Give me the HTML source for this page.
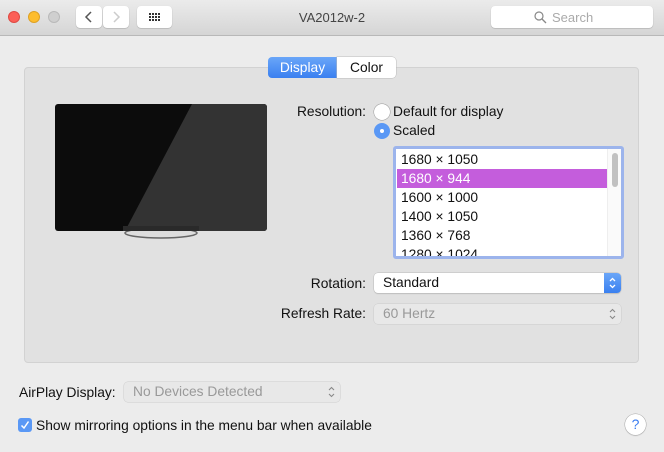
<!DOCTYPE html>
<html><head><meta charset="utf-8"><style>
*{box-sizing:border-box;margin:0;padding:0}
body{width:664px;height:452px;overflow:hidden;background:#ececec;font-family:"Liberation Sans",sans-serif;font-size:13.8px;color:#111;position:relative}
.a{position:absolute}
.tb{left:0;top:0;width:664px;height:36px;background:linear-gradient(#ebebeb,#d5d5d5);border-bottom:1px solid #b8b8b8}
.dot{width:12px;height:12px;border-radius:50%;top:11px}
.btn{background:#fff;border-radius:4px;box-shadow:0 0.5px 1px rgba(0,0,0,.25);top:6px;height:22px}
.panel{left:24px;top:67px;width:615px;height:296px;background:#e1e1e1;border:1px solid #d2d2d2;border-radius:4px}
.lbl{text-align:right;width:120px}
.pop{background:#fff;border-radius:4px;box-shadow:0 0 0 0.5px #bbb,0 1px 1px rgba(0,0,0,.15);height:20px;padding:2px 0 0 9px}
.dis{background:#e8e8e8;color:#999;box-shadow:0 0 0 0.5px #ccc}
.row{height:19px;padding:2px 0 0 4px;width:210px}
</style></head><body>
<div class="a tb"></div>
<div class="a dot" style="left:8px;background:#fc5f57;border:.5px solid #de4a43"></div>
<div class="a dot" style="left:28px;background:#fdbd2e;border:.5px solid #dea124"></div>
<div class="a dot" style="left:48px;background:#cfcfcf;border:.5px solid #b9b9b9"></div>
<div class="a btn" style="left:76px;width:26px"><svg width="26" height="22"><path d="M15 6L10 11L15 16" stroke="#555" stroke-width="1.5" fill="none"/></svg></div>
<div class="a btn" style="left:103px;width:26px"><svg width="26" height="22"><path d="M11 6L16 11L11 16" stroke="#ccc" stroke-width="1.5" fill="none"/></svg></div>
<div class="a btn" style="left:137px;width:35px"><svg width="35" height="22"><g fill="#333"><rect x="12" y="7" width="2" height="2"/><rect x="15" y="7" width="2" height="2"/><rect x="18" y="7" width="2" height="2"/><rect x="21" y="7" width="2" height="2"/><rect x="12" y="10" width="2" height="2"/><rect x="15" y="10" width="2" height="2"/><rect x="18" y="10" width="2" height="2"/><rect x="21" y="10" width="2" height="2"/><rect x="12" y="13" width="2" height="2"/><rect x="15" y="13" width="2" height="2"/><rect x="18" y="13" width="2" height="2"/><rect x="21" y="13" width="2" height="2"/></g></svg></div>
<div class="a" style="left:0;width:664px;top:10px;text-align:center;color:#444;font-size:13px">VA2012w-2</div>
<div class="a btn" style="left:491px;width:162px;color:#aaa;padding:4px 0 0 43px;font-size:13px"><svg class="a" style="left:43px;top:5px" width="13" height="13"><circle cx="5" cy="5" r="4" stroke="#888" stroke-width="1.2" fill="none"/><path d="M8 8L12 12" stroke="#888" stroke-width="1.3"/></svg><span style="margin-left:18px">Search</span></div>

<div class="a panel"></div>
<div class="a" style="left:268px;top:57px;width:69px;height:21px;background:linear-gradient(#6aa6f8,#3a80f0);color:#fff;border-radius:4px 0 0 4px;text-align:center;padding-top:3px">Display</div>
<div class="a" style="left:337px;top:57px;width:59px;height:21px;background:#fff;border-radius:0 4px 4px 0;box-shadow:0 0 0 .5px #bbb;text-align:center;padding-top:3px">Color</div>

<svg class="a" style="left:55px;top:104px" width="212" height="136">
<rect x="0" y="0" width="212" height="127" rx="3" fill="#0c0c0c"/>
<path d="M137 0H209a3 3 0 0 1 3 3V124a3 3 0 0 1-3 3H70Z" fill="#333"/>
<ellipse cx="106" cy="129" rx="36" ry="5" fill="#ddd" stroke="#666" stroke-width="1.5"/>
<rect x="68" y="122" width="76" height="5" fill="#2a2a2a"/>
</svg>

<div class="a lbl" style="left:246px;top:104px">Resolution:</div>
<div class="a" style="left:374px;top:104px;width:16px;height:16px;border-radius:50%;background:#fff;box-shadow:0 0 0 .5px #999"></div>
<div class="a" style="left:393px;top:104px">Default for display</div>
<div class="a" style="left:374px;top:123px;width:16px;height:16px;border-radius:50%;background:#5a98f5"><div class="a" style="left:6px;top:6px;width:4px;height:4px;border-radius:50%;background:#fff"></div></div>
<div class="a" style="left:393px;top:123px">Scaled</div>

<div class="a" style="left:393px;top:146px;width:231px;height:113px;border:3px solid #9cb4ec;border-radius:3px;background:#fff;overflow:hidden">
<div style="position:absolute;left:1px;top:1px;height:107px;overflow:hidden">
<div class="row">1680 × 1050</div>
<div class="row" style="background:#c45ddc;color:#fff">1680 × 944</div>
<div class="row">1600 × 1000</div>
<div class="row">1400 × 1050</div>
<div class="row">1360 × 768</div>
<div class="row">1280 × 1024</div></div>
<div class="a" style="right:0;top:0;width:14px;height:107px;border-left:1px solid #eee;background:#fafafa"><div class="a" style="left:4px;top:4px;width:6px;height:34px;border-radius:3px;background:#c1c1c1"></div></div>
</div>

<div class="a lbl" style="left:246px;top:276px">Rotation:</div>
<div class="a pop" style="left:374px;top:273px;width:247px">Standard<div class="a" style="right:0;top:0;width:17px;height:20px;background:linear-gradient(#6aa6f8,#3a80f0);border-radius:0 4px 4px 0"><svg width="17" height="20"><path d="M6 8L8.5 5.5L11 8M6 12L8.5 14.5L11 12" stroke="#fff" stroke-width="1.3" fill="none"/></svg></div></div>
<div class="a lbl" style="left:246px;top:306px">Refresh Rate:</div>
<div class="a pop dis" style="left:374px;top:304px;width:247px">60 Hertz<svg class="a" style="right:0;top:0" width="17" height="20"><path d="M6 8L8.5 5.5L11 8M6 12L8.5 14.5L11 12" stroke="#888" stroke-width="1.1" fill="none"/></svg></div>

<div class="a" style="left:19px;top:385px">AirPlay Display:</div>
<div class="a pop dis" style="left:124px;top:382px;width:216px">No Devices Detected<svg class="a" style="right:0;top:0" width="17" height="20"><path d="M6 8L8.5 5.5L11 8M6 12L8.5 14.5L11 12" stroke="#888" stroke-width="1.1" fill="none"/></svg></div>

<div class="a" style="left:18px;top:418px;width:14px;height:14px;border-radius:3px;background:#5a98f5"><svg width="14" height="14"><path d="M3.5 7.5L6 10L10.5 3.5" stroke="#fff" stroke-width="1.5" fill="none"/></svg></div>
<div class="a" style="left:36px;top:418px">Show mirroring options in the menu bar when available</div>
<div class="a" style="left:625px;top:414px;width:21px;height:21px;border-radius:50%;background:#fff;box-shadow:0 0 0 .5px #aaa,0 1px 1px rgba(0,0,0,.15);color:#3a7cf0;text-align:center;font-size:14px;padding-top:2px">?</div>
</body></html>
